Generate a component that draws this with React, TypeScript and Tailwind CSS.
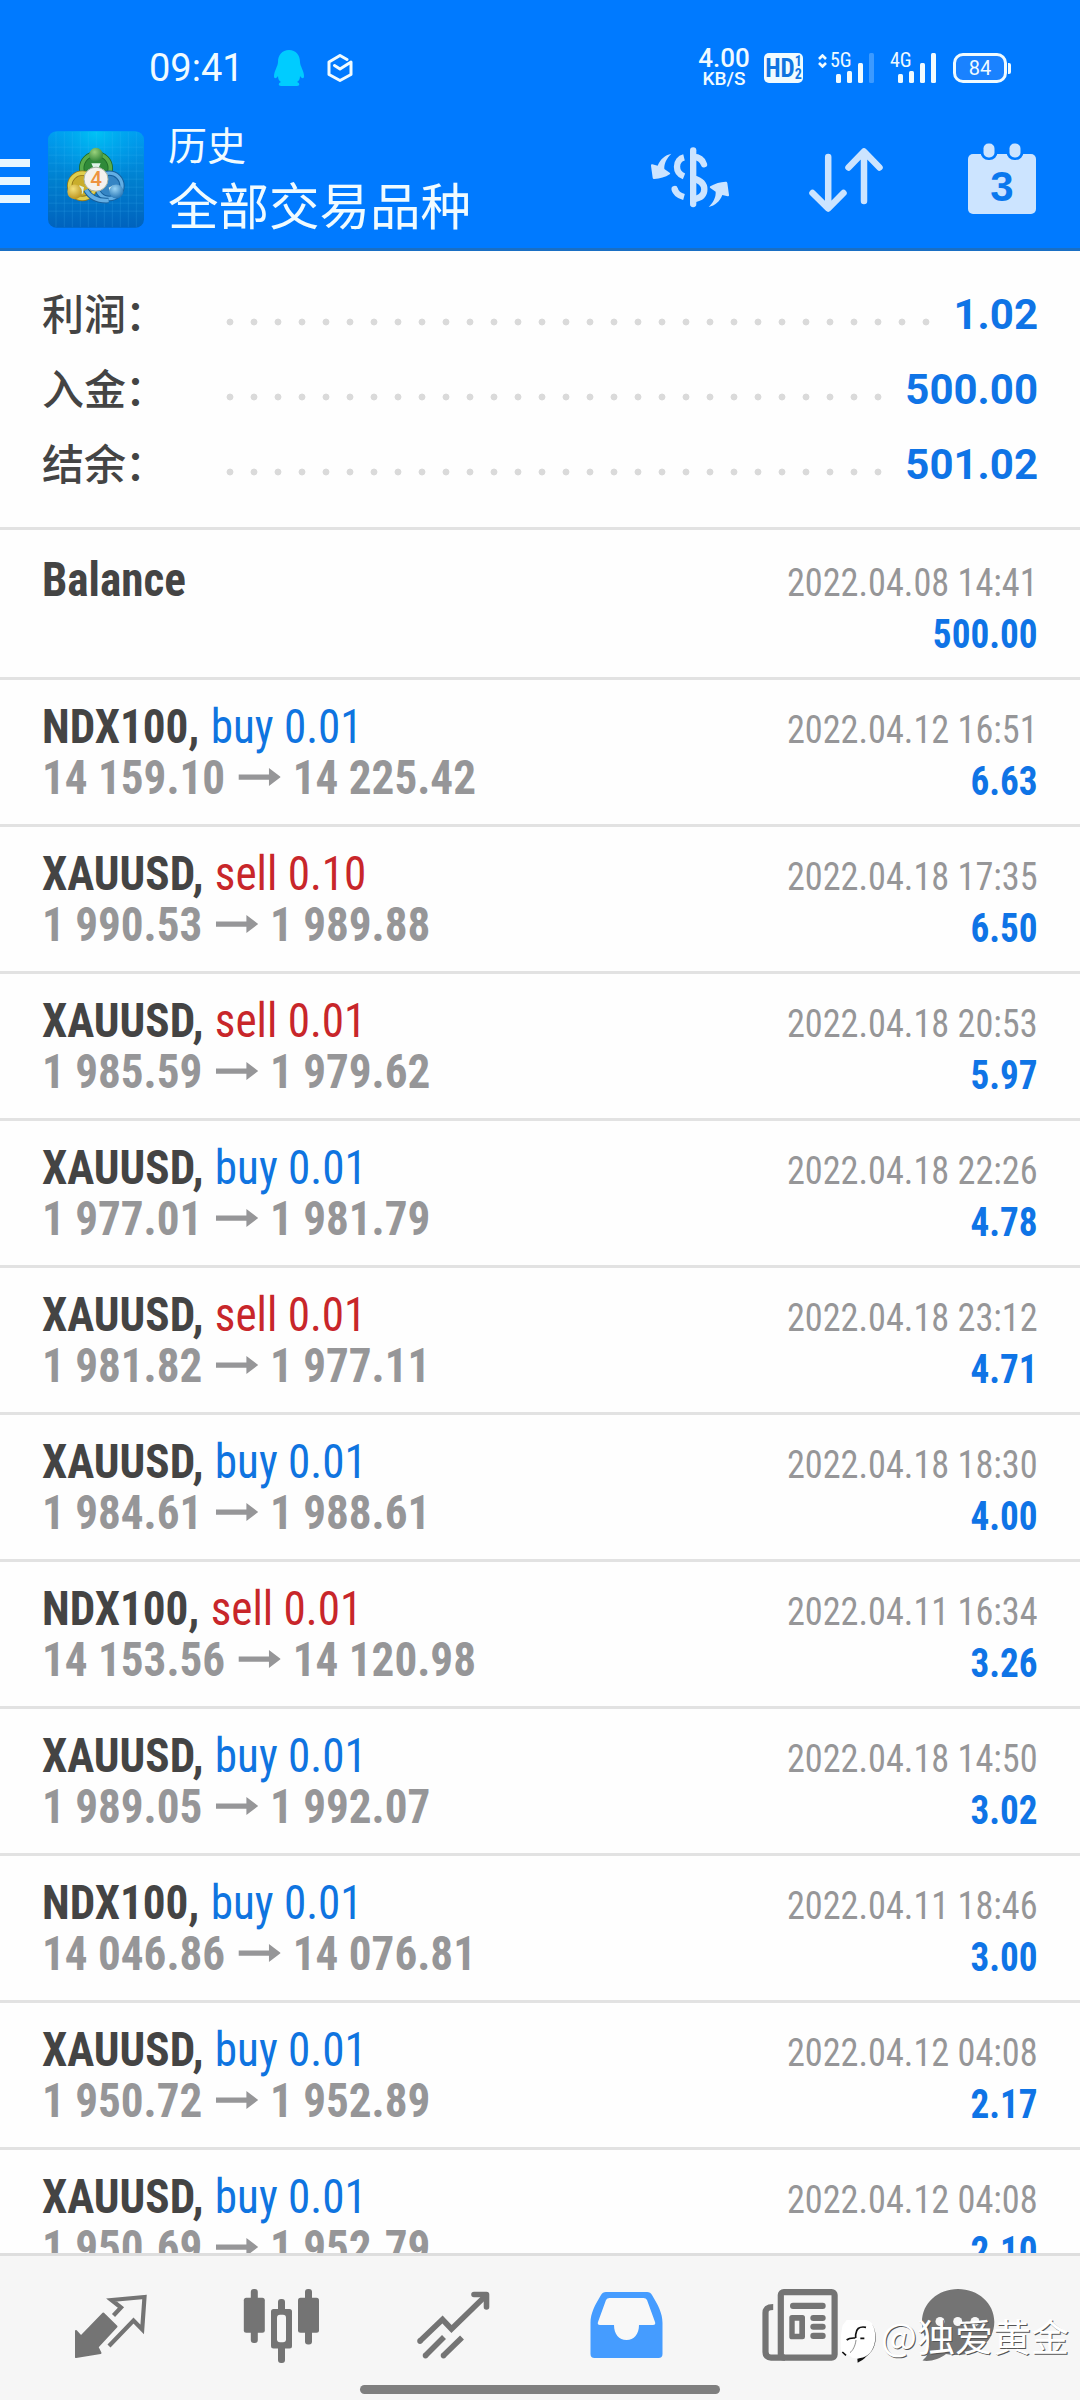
import React from "react";

type Deal = {
  symbol: string;
  side?: "buy" | "sell";
  volume?: string;
  open?: string;
  close?: string;
  time: string;
  profit: string;
};

const summary = [
  { label: "利润", dots: 30, value: "1.02" },
  { label: "入金", dots: 28, value: "500.00" },
  { label: "结余", dots: 28, value: "501.02" },
];

const deals: Deal[] = [
  { symbol: "Balance", time: "2022.04.08 14:41", profit: "500.00" },
  { symbol: "NDX100", side: "buy", volume: "0.01", open: "14 159.10", close: "14 225.42", time: "2022.04.12 16:51", profit: "6.63" },
  { symbol: "XAUUSD", side: "sell", volume: "0.10", open: "1 990.53", close: "1 989.88", time: "2022.04.18 17:35", profit: "6.50" },
  { symbol: "XAUUSD", side: "sell", volume: "0.01", open: "1 985.59", close: "1 979.62", time: "2022.04.18 20:53", profit: "5.97" },
  { symbol: "XAUUSD", side: "buy", volume: "0.01", open: "1 977.01", close: "1 981.79", time: "2022.04.18 22:26", profit: "4.78" },
  { symbol: "XAUUSD", side: "sell", volume: "0.01", open: "1 981.82", close: "1 977.11", time: "2022.04.18 23:12", profit: "4.71" },
  { symbol: "XAUUSD", side: "buy", volume: "0.01", open: "1 984.61", close: "1 988.61", time: "2022.04.18 18:30", profit: "4.00" },
  { symbol: "NDX100", side: "sell", volume: "0.01", open: "14 153.56", close: "14 120.98", time: "2022.04.11 16:34", profit: "3.26" },
  { symbol: "XAUUSD", side: "buy", volume: "0.01", open: "1 989.05", close: "1 992.07", time: "2022.04.18 14:50", profit: "3.02" },
  { symbol: "NDX100", side: "buy", volume: "0.01", open: "14 046.86", close: "14 076.81", time: "2022.04.11 18:46", profit: "3.00" },
  { symbol: "XAUUSD", side: "buy", volume: "0.01", open: "1 950.72", close: "1 952.89", time: "2022.04.12 04:08", profit: "2.17" },
  { symbol: "XAUUSD", side: "buy", volume: "0.01", open: "1 950.69", close: "1 952.79", time: "2022.04.12 04:08", profit: "2.10" },
];

const SignalBars = ({ dim }: { dim?: boolean }) => (
  <svg width="39" height="30" viewBox="0 0 39 30" fill="#f0fbff">
    <rect x="0" y="21" width="5" height="9" rx="1.5" />
    <rect x="11" y="18" width="5" height="12" rx="1.5" />
    <rect x="22" y="10" width="5" height="20" rx="1.5" />
    <rect x="33" y="0" width="5" height="30" rx="1.5" opacity={dim ? 0.25 : 1} />
  </svg>
);

const StatusBar = () => (
  <div className="flex h-[112px] items-center pt-[24px] pl-[149px] pr-[69px] text-[#f0fbff]">
    <span className="w-[125px] origin-left scale-x-[0.975] whitespace-nowrap font-[Roboto] text-[39px] leading-none">
      09:41
    </span>
    <svg width="30" height="36" viewBox="0 0 30 36" fill="#00ccff">
      <path d="M15 0C22 0 26 5 26 12C26 16 30 21 30 26C30 29 28 29 26 26C26 29 25 31 23 32C26 33 26 36 23 36H7C4 36 4 33 7 32C5 31 4 29 4 26C2 29 0 29 0 26C0 21 4 16 4 12C4 5 8 0 15 0Z" />
    </svg>
    <svg className="ml-[23px]" width="26" height="28" viewBox="0 0 26 28" fill="none" stroke="#f0fbff" strokeWidth="3" strokeLinejoin="round" strokeLinecap="round">
      <path d="M20 5.5L13 1.5L2 8V20.5L13 26.5L24 20.5V8L13 15L7.5 11.5" />
    </svg>

    <div className="flex-1" />

    <div className="flex w-[52px] flex-col items-center font-[Roboto] leading-none">
      <span className="text-[26px] font-medium leading-[22px]">4.00</span>
      <span className="text-[19px] font-medium leading-[20px]">KB/S</span>
    </div>
    <div className="ml-[14px] flex h-[30px] w-[39px] items-center justify-center rounded-[5px] bg-[#f0fbff] font-[Roboto] font-bold text-[#0f74e0]">
      <span className="text-[25px] leading-none [font-stretch:75%]">HD</span>
      <span className="flex flex-col text-[14px] leading-[13px] [font-stretch:75%]">
        <span>1</span>
        <span>2</span>
      </span>
    </div>
    <div className="relative ml-[15px] flex h-[30px] w-[57px] justify-end">
      <svg className="absolute left-0 top-[1px]" width="9" height="14" viewBox="0 0 9 14" fill="none" stroke="#f0fbff" strokeWidth="2.6">
        <path d="M1 5L4.500 1.500L8 5M1 9L4.500 12.500L8 9" />
      </svg>
      <span className="absolute left-[12px] top-[-3px] font-[Roboto] text-[20px] leading-[20px] [font-stretch:85%]">5G</span>
      <SignalBars dim />
    </div>
    <div className="relative ml-[16px] flex h-[30px] w-[46px] justify-end">
      <span className="absolute left-[-1px] top-[-3px] font-[Roboto] text-[20px] leading-[20px] [font-stretch:85%]">4G</span>
      <SignalBars />
    </div>
    <div className="ml-[16px] flex h-[30px] w-[54px] items-center justify-center rounded-[10px] border-[3px] border-[#f0fbff] bg-[#1a82ff] font-[Roboto] text-[20px] leading-none">
      84
    </div>
    <div className="ml-[1px] h-[11px] w-[3px] rounded-r-[2px] bg-[#f0fbff]" />
  </div>
);

const AppLogo = () => (
  <svg width="96" height="97" viewBox="24 32 288 290">
    <defs>
      <linearGradient id="tile" x1="0" y1="0" x2="0" y2="1">
        <stop offset="0" stopColor="#009df2" />
        <stop offset="0.5" stopColor="#0080cf" />
        <stop offset="1" stopColor="#0062bd" />
      </linearGradient>
      <radialGradient id="glow" cx="0.5" cy="0" r="0.55">
        <stop offset="0" stopColor="#00c4f5" />
        <stop offset="1" stopColor="#00a0e8" stopOpacity="0" />
      </radialGradient>
      <radialGradient id="green" cx="0.4" cy="0.3" r="0.8">
        <stop offset="0" stopColor="#9ad27c" />
        <stop offset="1" stopColor="#237a2e" />
      </radialGradient>
      <radialGradient id="yellow" cx="0.4" cy="0.3" r="0.8">
        <stop offset="0" stopColor="#f3e07a" />
        <stop offset="1" stopColor="#b58a12" />
      </radialGradient>
      <radialGradient id="blue" cx="0.4" cy="0.3" r="0.8">
        <stop offset="0" stopColor="#9ad4f5" />
        <stop offset="1" stopColor="#1769ad" />
      </radialGradient>
    </defs>
    <rect x="24" y="32" width="288" height="290" rx="26" fill="url(#tile)" />
    <rect x="24" y="32" width="288" height="290" rx="26" fill="url(#glow)" />
    <g stroke="#4fc4ff" strokeOpacity="0.16" strokeWidth="3">
      <path d="M48 34V320M73 34V320M97 34V320M121 34V320M145 34V320M169 34V320M193 34V320M217 34V320M241 34V320M265 34V320M289 34V320" />
      <path d="M26 80H310M26 104H310M26 128H310M26 152H310M26 176H310M26 200H310M26 224H310M26 248H310M26 272H310" />
    </g>
    {/* Three people joined in a ring */}
    <circle cx="168" cy="143" r="43" fill="#2f8a39" stroke="#1d6b28" strokeWidth="16" />
    <circle cx="168" cy="143" r="43" fill="none" stroke="#58ad4c" strokeWidth="11" />
    <circle cx="208" cy="196" r="38" fill="#3585c4" stroke="#175f9c" strokeWidth="16" />
    <circle cx="208" cy="196" r="38" fill="none" stroke="#62aee4" strokeWidth="10" />
    <circle cx="127" cy="196" r="38" fill="#c9ad2c" stroke="#94781a" strokeWidth="16" />
    <circle cx="127" cy="196" r="38" fill="none" stroke="#e0cf4e" strokeWidth="11" />
    <path d="M138 208C150 230 172 242 206 240" fill="none" stroke="#175f9c" strokeWidth="17" />
    <path d="M138 208C150 230 172 242 206 240" fill="none" stroke="#62aee4" strokeWidth="11" />
    <path d="M154 128H182L176 142H160ZM118 194L132 200L128 220H116ZM206 202L220 194L222 218H212Z" fill="#dff3e8" />
    <circle cx="168" cy="103" r="21" fill="url(#green)" />
    <circle cx="104" cy="214" r="22" fill="url(#yellow)" />
    <circle cx="229" cy="213" r="21" fill="url(#blue)" />
    <circle cx="168" cy="176" r="36" fill="#f4f1ee" stroke="#a9b5a5" strokeWidth="3" />
    <text x="168" y="197" textAnchor="middle" fontFamily="Roboto" fontSize="62" fontWeight="500" fill="#ee9340">
      4
    </text>
  </svg>
);

const SymbolIcon = () => (
  <svg width="110" height="90" viewBox="0 0 330 270" fill="none" stroke="#cce4ff" strokeWidth="19">
    <path d="M159.500 61V222" strokeLinecap="round" />
    <path d="M192 103C187 87 176 81 160 81" strokeLinecap="round" />
    <path d="M132 82C120 85 111 95 111 110C111 126 119 134 132 139" />
    <path d="M104 177C107 190 117 197 132 201" />
    <path d="M104 177L104.500 179" strokeLinecap="round" />
    <path d="M160 145C182 151 193 160 193 178C193 194 182 205 160 208" />
    <g fill="#cce4ff" stroke="none">
      <path d="M94 71C75 75 60 88 53 107L37 103C34 103 33 104 33 107L38 143C39 146 40 147 43 147C60 146 76 142 89 133C91 131 91 130 89 128L73 117C72 100 80 85 94 71Z" />
      <path d="M206 231C225 227 240 214 247 195L263 199C266 199 267 198 267 195L262 159C261 156 260 155 257 155C240 156 226 160 211 169C209 171 209 172 211 174L227 185C228 202 220 217 206 231Z" />
    </g>
  </svg>
);

const Toolbar = () => (
  <div className="flex h-[136px] items-center">
    <div className="flex w-[30px] flex-col gap-[10px] pt-[2px]">
      <div className="h-2 bg-[#e8f6ff]" />
      <div className="h-2 bg-[#e8f6ff]" />
      <div className="h-2 bg-[#e8f6ff]" />
    </div>
    <div className="ml-[18px] -mt-[2px]">
      <AppLogo />
    </div>
    <div className="-mt-[12px] ml-[24px] w-[472px] whitespace-nowrap font-['Noto_Sans_CJK_SC',sans-serif] text-[#f0fbff]">
      <div className="text-[39px] leading-[58px]">历史</div>
      <div className="text-[50.5px] leading-[62px]">全部交易品种</div>
    </div>
    <div className="-mt-[10px]">
      <SymbolIcon />
    </div>
    <svg className="ml-[55px]" width="80" height="70" viewBox="805 144 80 70" fill="none" stroke="#cce4ff" strokeWidth="6.500" strokeLinecap="round" strokeLinejoin="round">
      <path d="M828.200 156V206M812.500 192L828.200 207.500L843.500 192" />
      <path d="M864 200V151M848.500 166.500L864 150.500L879.500 166.500" />
    </svg>
    <svg className="ml-[81px]" width="74" height="76" viewBox="966 141 74 76">
      <rect x="968" y="153" width="68" height="60" rx="5" fill="#cce4ff" />
      <rect x="980.500" y="138" width="17" height="21" rx="8" fill="#007aff" />
      <rect x="1006.500" y="138" width="17" height="21" rx="8" fill="#007aff" />
      <rect x="983.500" y="142.500" width="11" height="14" rx="5" fill="#cce4ff" />
      <rect x="1009.500" y="142.500" width="11" height="14" rx="5" fill="#cce4ff" />
      <text x="1002" y="200" textAnchor="middle" fontFamily="Liberation Sans" fontSize="42" fontWeight="700" fill="#0a78ee">
        3
      </text>
    </svg>
  </div>
);

const PriceArrow = () => (
  <svg className="ml-[14px] mr-[13px] mt-[15px]" width="45" height="20" viewBox="0 0 43 20" preserveAspectRatio="none" fill="#969698">
    <path d="M0 7.500H31V1L43 10L31 19V12.700H0Z" />
  </svg>
);

const DealRow = ({ deal }: { deal: Deal }) => (
  <div className="flex h-[147px] shrink-0 justify-between border-b-[3px] border-[#e2e2e2] pl-[42px] pr-[42px] font-['Roboto_Condensed',Roboto,sans-serif]">
    <div className="pt-[21px] text-[48px] leading-[51px]">
      <div className="origin-left scale-x-[0.94] whitespace-nowrap font-bold text-[#444]">
        {deal.symbol}
        {deal.side && (
          <>
            ,{" "}
            <span className={deal.side === "buy" ? "ml-px font-normal text-[#0f74e0]" : "ml-px font-normal text-[#c8262a]"}>
              {deal.side} {deal.volume}
            </span>
          </>
        )}
      </div>
      {deal.open && (
        <div className="flex origin-left scale-x-[0.94] whitespace-nowrap font-bold text-[#969698]">
          <span>{deal.open}</span>
          <PriceArrow />
          <span>{deal.close}</span>
        </div>
      )}
    </div>
    <div className="whitespace-nowrap pt-[25px] text-right text-[39px] leading-[51px]">
      <div className="origin-right scale-x-[0.93] text-[#969698]">{deal.time}</div>
      <div className="origin-right scale-x-[0.93] text-[40px] font-bold text-[#0f74e6]">{deal.profit}</div>
    </div>
  </div>
);

const NavBar = () => (
  <div className="relative h-[147px] border-t-[3px] border-[#dedede] bg-[#f6f6f6]">
    <div className="flex pt-[30px] pl-[24px]">
      <div className="flex w-[172px] justify-center">
        <svg width="100" height="80" viewBox="60 2286 100 80" fill="none" stroke="#747474" strokeWidth="4.200">
          <path d="M113.500 2315.500L121 2307.500L111.500 2300L144.500 2297L142.200 2329.500L133.500 2320.500L109 2346" />
          <path d="M103.300 2313.500L116.500 2326.500L97.500 2347L100.500 2353L76 2357V2331L81 2336.500Z" fill="#747474" strokeWidth="2" strokeLinejoin="round" />
        </svg>
      </div>
      <div className="flex w-[172px] justify-center">
        <svg width="100" height="80" viewBox="232 2286 100 80" fill="#747474">
          <rect x="243.800" y="2297.700" width="21" height="35" rx="2.500" />
          <rect x="250.800" y="2289" width="7" height="54" rx="3" />
          <rect x="298" y="2297.700" width="21" height="35" rx="2.500" />
          <rect x="305" y="2289" width="7" height="55.500" rx="3" />
          <rect x="278" y="2299" width="7" height="64" rx="3" />
          <rect x="271" y="2309" width="21" height="39.500" rx="2.500" />
          <rect x="277" y="2314.700" width="9" height="27.500" rx="3" fill="#f6f6f6" />
        </svg>
      </div>
      <div className="flex w-[172px] justify-center">
        <svg width="100" height="80" viewBox="404 2286 100 80" fill="none" stroke="#747474" strokeWidth="5.600">
          <path d="M420 2341L442.500 2319.500L451.500 2329L487 2294.500" />
          <path d="M420 2341V2341.100M474 2294.500H486.500V2307M425.500 2355.500V2355.600M443.500 2355.500V2355.600" strokeLinecap="round" strokeLinejoin="round" />
          <path d="M425.500 2355.500L444 2337M443.500 2355.500L462 2337.500" />
        </svg>
      </div>
      <div className="flex w-[172px] justify-center">
        <svg width="100" height="80" viewBox="576 2286 100 80">
          <path d="M606 2292H647Q650.500 2292 652 2295C658 2305 662.500 2313 662.500 2323V2354Q662.500 2358 658.500 2358H594.500Q590.500 2358 590.500 2354V2323C590.500 2313 595 2305 601 2295Q602.500 2292 606 2292Z" fill="#459cff" />
          <path d="M609.500 2298H643.500Q646 2298 647 2300L655 2322Q656 2325 653 2325H639C639 2334 634 2340 626.500 2340C619 2340 614 2334 614 2325H600Q597 2325 598 2322L606 2300Q607 2298 609.500 2298Z" fill="#f8f8f8" />
        </svg>
      </div>
      <div className="flex w-[172px] justify-center">
        <svg width="100" height="80" viewBox="748 2286 100 80" fill="none" stroke="#747474" strokeWidth="6.200">
          <rect x="780.800" y="2292.100" width="53.800" height="65.500" rx="3" />
          <path d="M773.200 2307C768 2307 765.500 2308.500 765.500 2313V2352C765.500 2355.500 767.500 2357.600 771 2357.600H785" />
          <g fill="#747474" stroke="none">
            <rect x="790" y="2302.700" width="35.700" height="6.300" rx="3" />
            <rect x="810.300" y="2315" width="15.400" height="6" rx="3" />
            <rect x="810.300" y="2323.700" width="15.400" height="6" rx="3" />
            <rect x="810.300" y="2332.700" width="15.400" height="6.300" rx="3" />
            <path fillRule="evenodd" d="M792 2315H802.500Q805 2315 805 2317.500V2337Q805 2339.300 802.500 2339.300H792Q789.300 2339.300 789.300 2337V2317.500Q789.300 2315 792 2315ZM794.700 2320.700V2333.700H799.300V2320.700Z" />
          </g>
        </svg>
      </div>
      <div className="flex w-[172px] justify-center">
        <svg width="100" height="80" viewBox="920 2286 100 80">
          <path d="M958 2289C978 2289 994.300 2303 994.300 2322C994.300 2341 978 2355 958 2355C952 2355 948 2354.500 946 2354C940 2359 930 2362 922.500 2360.500C927 2357 929.500 2352 930 2346C925 2339 922 2331 922 2322C922 2303 938 2289 958 2289Z" fill="#747474" />
          <g fill="#f6f6f6">
            <circle cx="940" cy="2321.500" r="4.500" />
            <circle cx="957.700" cy="2321.500" r="4.500" />
            <circle cx="975" cy="2321.500" r="4.500" />
          </g>
        </svg>
      </div>
    </div>

    {/* Gesture bar */}
    <div className="absolute bottom-[6px] left-[360px] h-[9px] w-[360px] rounded-full bg-[#7f7f7f]" />

    {/* Author signature */}
    <div className="absolute left-[838px] top-[60px] flex items-start whitespace-nowrap">
      <svg width="45" height="50" viewBox="264 140 135 150">
        <path d="M290 152H348C366 156 377 172 377 196C377 236 362 262 323 279L321 266C312 268 306 266 300 260L276 250C270 240 272 190 278 168Z" fill="#fff" />
        <path d="M366 164C382 190 380 238 352 258C344 264 335 266 322 268L323 280C334 274 342 270 348 262C382 240 384 192 366 164Z" fill="#111" />
        <path d="M348 174C326 170 318 180 317 196V206M290 212C298 205 305 206 316 206M331 207H343M277 248L288 258" fill="none" stroke="#111" strokeWidth="5" />
        <path d="M318 212C316 230 308 244 300 250" fill="none" stroke="#777" strokeWidth="2.500" />
      </svg>
      <span className="-ml-[2px] -mt-[6px] font-['Noto_Sans_CJK_SC',sans-serif] text-[38px] leading-[50px] text-white [text-shadow:1px_1px_0_#555]">
        @独爱黄金
      </span>
    </div>
  </div>
);

const App: React.FC = () => {
  return (
    <div className="flex h-[2400px] w-[1080px] flex-col overflow-hidden bg-[#fefefe]">
      {/* Header Section */}
      <div className="h-[251px] shrink-0 border-b-[3px] border-[#1a6fc4] bg-[#007aff]">
        <StatusBar />
        <Toolbar />
      </div>

      {/* Totals */}
      <div className="h-[279px] shrink-0 border-b-[3px] border-[#e2e2e2] pt-[26px] px-[42px]">
        {summary.map((item) => (
          <div key={item.label} className="flex h-[75px] items-start">
            <div className="flex w-[176px] whitespace-nowrap font-['Noto_Sans_CJK_SC',sans-serif] text-[42px] font-medium leading-[70px] text-[#444]">
              {item.label}
              <span className="-ml-[1px]">：</span>
            </div>
            <div
              className="mt-[33px] h-6 bg-[radial-gradient(circle,#dadada_3px,transparent_3.8px)] bg-[length:24px_24px]"
              style={{ width: item.dots * 24 }}
            />
            <div className="flex-1 text-right font-[Roboto] text-[42px] font-bold leading-[75px] text-[#0f74e6]">
              {item.value}
            </div>
          </div>
        ))}
      </div>

      {/* Deals */}
      <div className="flex min-h-0 flex-1 flex-col overflow-hidden pt-[3px]">
        {deals.map((deal, index) => (
          <DealRow key={index} deal={deal} />
        ))}
      </div>

      <NavBar />
    </div>
  );
};

export default App;
